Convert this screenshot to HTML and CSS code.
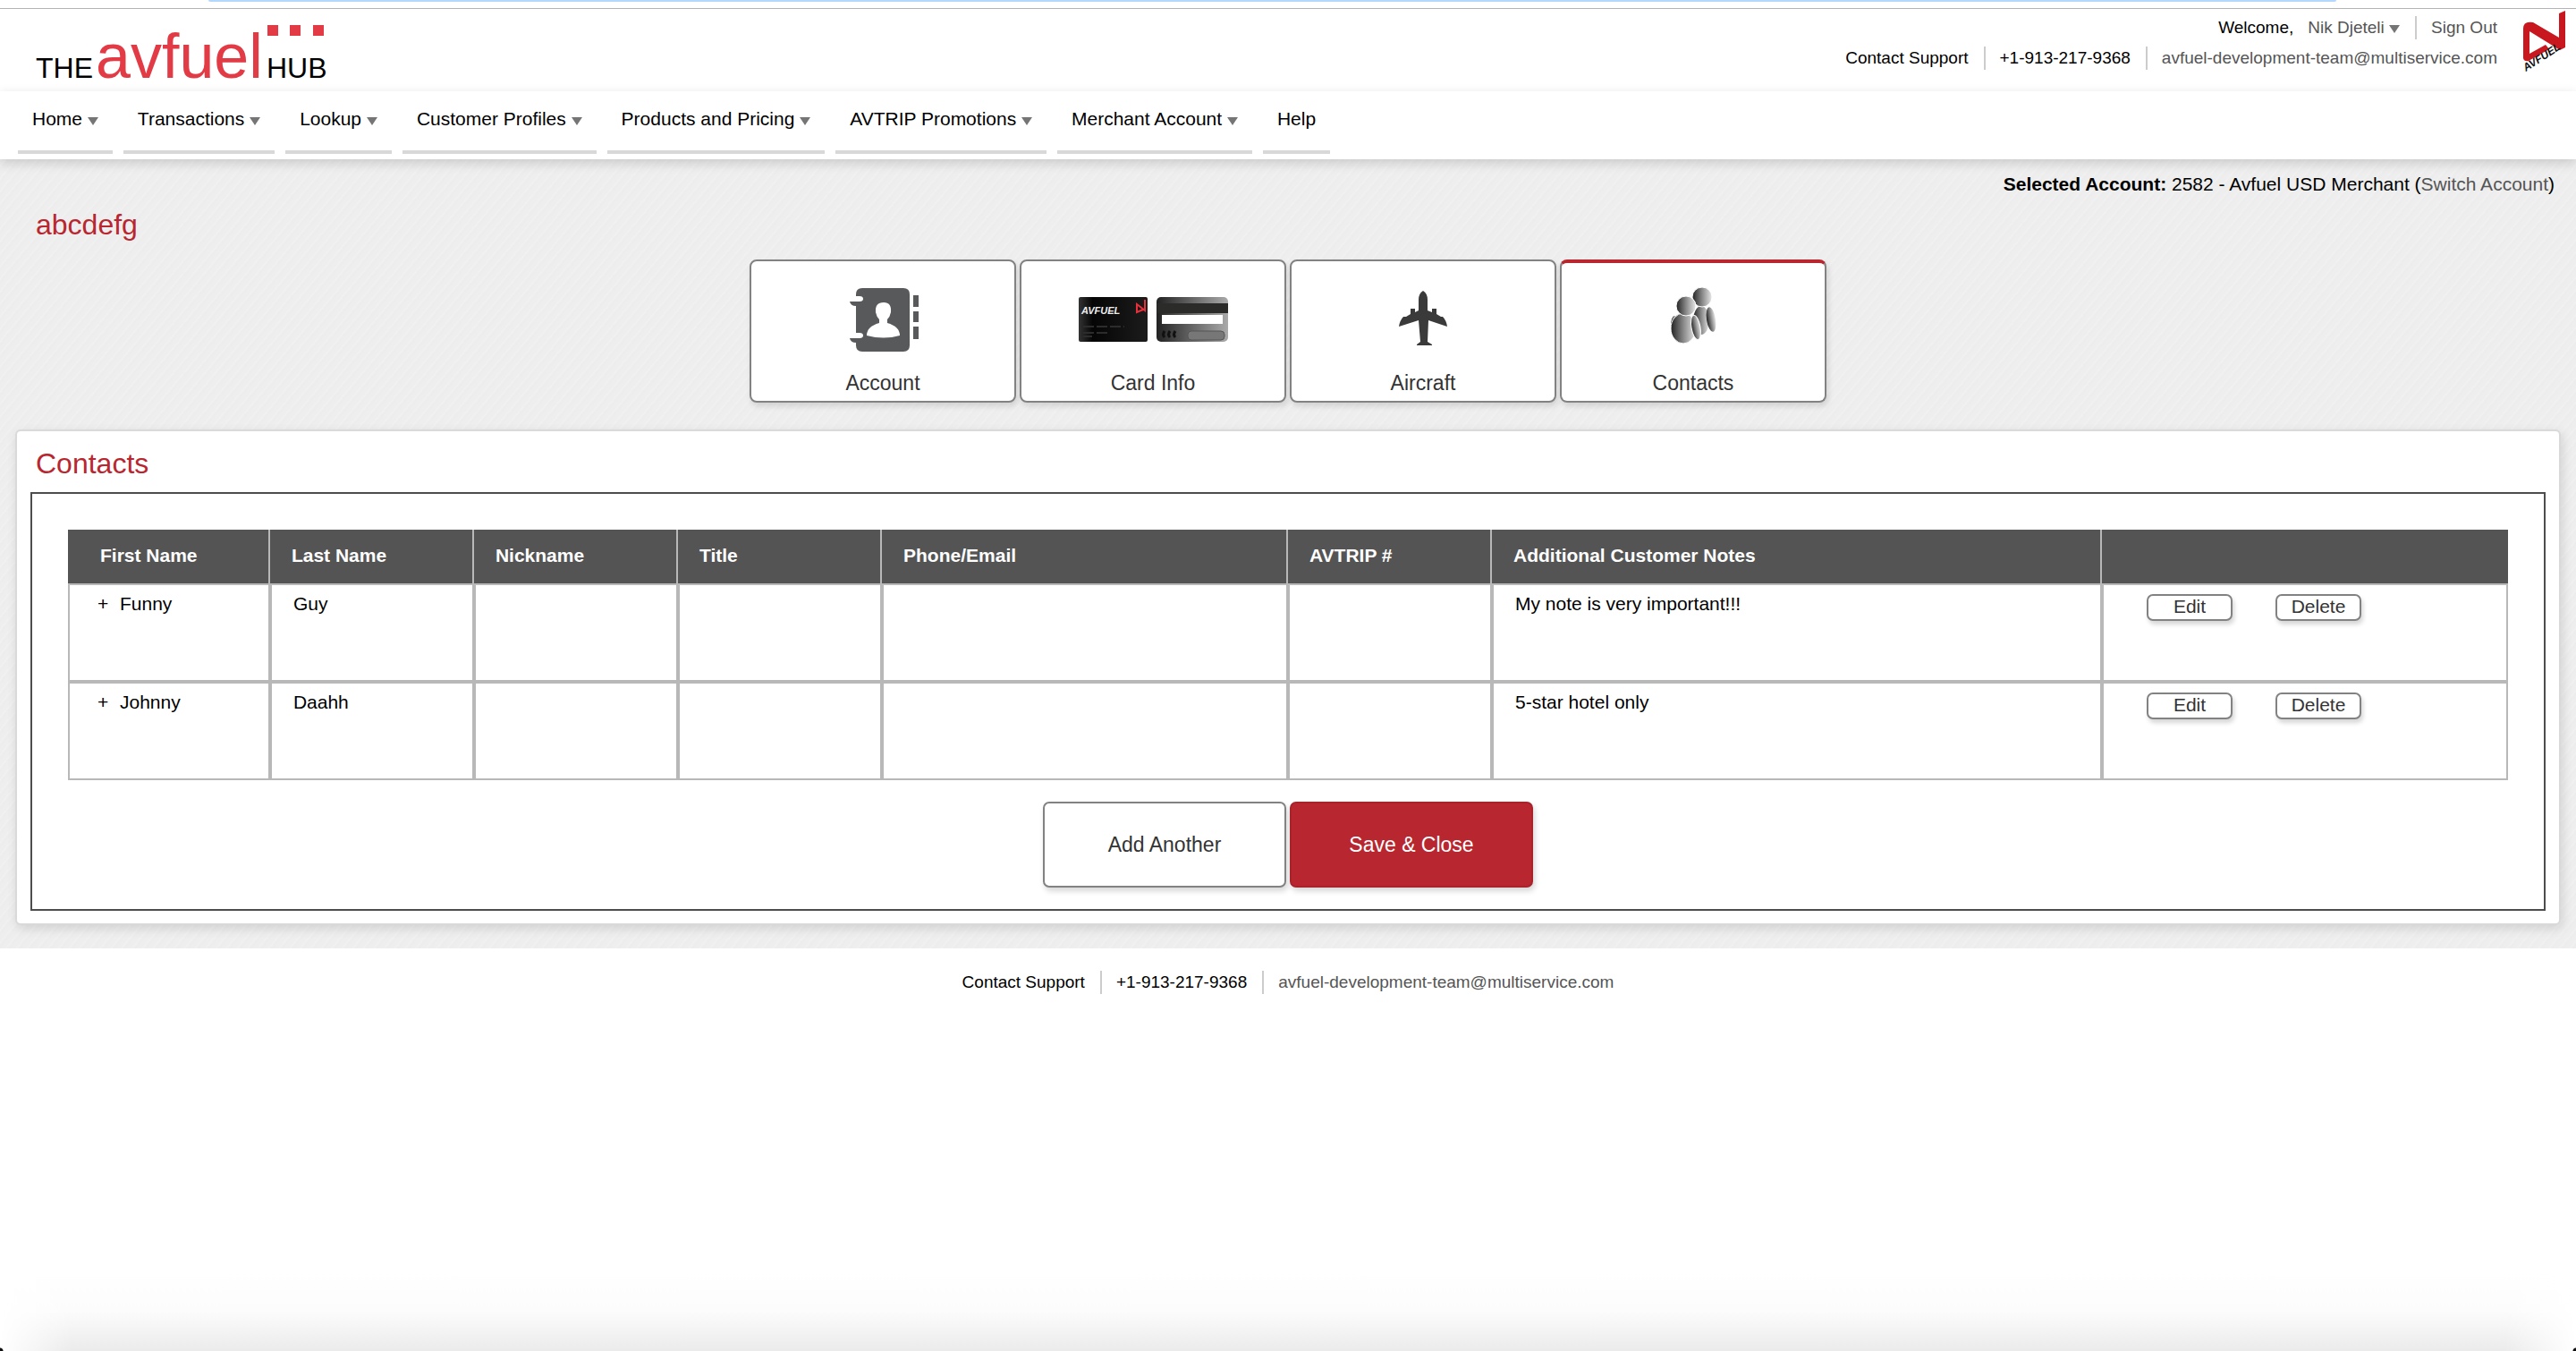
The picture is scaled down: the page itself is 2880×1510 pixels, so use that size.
FILE: index.html
```html
<!DOCTYPE html>
<html lang="en">
<head>
<meta charset="utf-8">
<title>The Avfuel Hub - Contacts</title>
<link rel="stylesheet" href="styles.css">
</head>
<body>
<div class="window-bar"><span class="window-tab"></span></div>
<header class="masthead">
  <a class="brand" href="#" aria-label="The Avfuel Hub">
    <svg width="340" height="84" viewBox="0 0 340 84">
      <text class="brand-thin" x="0" y="69">THE</text>
      <text class="brand-main" x="67" y="69">avfuel</text>
      <text class="brand-thin" x="258" y="69">HUB</text>
      <path fill="#e23b45" d="M259 10h12v12h-12zM284 10h12v12h-12zM310 10h12v12h-12z"/>
    </svg>
  </a>
  <div class="account-area">
    <div class="info-lines">
      <div class="info"><span class="welcome">Welcome,</span><a href="#" class="user">Nik Djeteli <i class="arrow"></i></a><a href="#" class="sep">Sign Out</a></div>
      <div class="info"><span>Contact Support</span><span class="sep">+1-913-217-9368</span><a href="#" class="sep">avfuel-development-team@multiservice.com</a></div>
    </div>
    <svg class="emblem" width="60" height="76" viewBox="0 0 60 76">
      <path d="M58 2L51 5V32L22 15Q11 13 11 22V55Q12 59 17 58L40 45 36 40 18 50V25L52 46 58 43Z" fill="#c8171e"/>
      <text class="emblem-text" transform="translate(14 70) rotate(-33)">AVFUEL</text>
    </svg>
  </div>
</header>
<nav class="menu">
  <a href="#">Home <i class="arrow"></i></a>
  <a href="#">Transactions <i class="arrow"></i></a>
  <a href="#">Lookup <i class="arrow"></i></a>
  <a href="#">Customer Profiles <i class="arrow"></i></a>
  <a href="#">Products and Pricing <i class="arrow"></i></a>
  <a href="#">AVTRIP Promotions <i class="arrow"></i></a>
  <a href="#">Merchant Account <i class="arrow"></i></a>
  <a href="#">Help</a>
</nav>
<main class="content">
  <p class="selected"><b>Selected Account:</b> 2582 - Avfuel USD Merchant (<a href="#">Switch Account</a>)</p>
  <h1>abcdefg</h1>
  <div class="tiles">
    <button class="tile" type="button">
      <svg width="80" height="72" viewBox="-6 0 80 72">
        <path fill="#58595b" d="M8 0h49q7 0 7 7v57q0 7-7 7H11q-7 0-7-7v-3q-6 0-7-5h11q4 0 4-3t-4-3H4V20q-6 0-7-5h11q4 0 4-3t-4-3H4V7q0-7 7-7z"/>
        <path fill="#58595b" d="M68 8h6v13h-6zM68 26h6v12h-6zM68 43h6v14h-6z"/>
        <path fill="#fff" d="M35 16q9 0 8 11-1 5-4 8v4q14 4 14 14-18 5-37 0 0-10 14-14v-4q-3-3-4-8-1-11 9-11z"/>
      </svg>
      <span>Account</span>
    </button>
    <button class="tile" type="button">
      <svg width="168" height="72" viewBox="-1 0 168 72">
        <defs>
          <linearGradient id="front" x1="0" x2="1"><stop offset="0" stop-color="#333"/><stop offset=".2" stop-color="#050505"/><stop offset="1" stop-color="#1c1c1c"/></linearGradient>
          <linearGradient id="back" x1="0" x2="1"><stop offset="0" stop-color="#222"/><stop offset="1" stop-color="#aaa"/></linearGradient>
        </defs>
        <rect x="0" y="10" width="77" height="50" rx="2" fill="url(#front)"/>
        <text class="card-text" x="3" y="29">AVFUEL</text>
        <path d="M74 13v12l-9-7v9l7-3" fill="none" stroke="#e8303a" stroke-width="2"/>
        <path d="M5 43h46M5 50h30M5 54h10" stroke="#2c2c2c" stroke-width="2" stroke-dasharray="12 3"/>
        <rect x="87" y="10" width="80" height="50" rx="5" fill="url(#back)"/>
        <path fill="#2b2b29" d="M88 17h79v11H88z"/>
        <path fill="#fff" d="M93 30h68v10H93z"/>
        <path d="M96 48q-3 4 0 7M102 48q-3 4 0 7M108 48q-3 4 0 7" fill="none" stroke="#111" stroke-width="3"/>
        <rect x="122" y="48" width="41" height="10" rx="4" fill="#777" stroke="#555"/>
      </svg>
      <span>Card Info</span>
    </button>
    <button class="tile" type="button">
      <svg width="56" height="72" viewBox="0 0 56 72">
        <path fill="#3a3a3a" d="M28 3q5 3 5 10v12l5 2v-4h5v6l5 3h2q4 4 5 11l-21-7-1 24 5 3v1H21v-1l4-3-2-24-22 7q1-7 5-11h3l5-3v-6h5v4l4-2V13q0-7 5-10z"/>
      </svg>
      <span>Aircraft</span>
    </button>
    <button class="tile active" type="button">
      <svg width="56" height="72" viewBox="0 0 56 72">
        <defs><linearGradient id="person" x1="0" x2="1"><stop offset="0" stop-color="#222"/><stop offset=".5" stop-color="#888"/><stop offset="1" stop-color="#e8e8e8"/></linearGradient></defs>
        <ellipse cx="37" cy="36" rx="9" ry="16" fill="url(#person)"/>
        <ellipse cx="48" cy="35" rx="5" ry="14" fill="url(#person)" transform="rotate(-9 48 35)"/>
        <circle cx="38" cy="10" r="11" fill="url(#person)" stroke="#fff"/>
        <ellipse cx="7" cy="42" rx="4" ry="11" fill="url(#person)"/>
        <ellipse cx="17" cy="45" rx="14" ry="17" fill="url(#person)" stroke="#fff"/>
        <ellipse cx="31" cy="44" rx="5" ry="14" fill="url(#person)" stroke="#fff" transform="rotate(-10 31 44)"/>
        <circle cx="20" cy="20" r="11" fill="url(#person)" stroke="#fff"/>
      </svg>
      <span>Contacts</span>
    </button>
  </div>
  <section class="panel">
    <h2>Contacts</h2>
    <div class="frame">
      <table class="grid">
        <colgroup><col class="w-first"><col class="w1"><col class="w1"><col class="w1"><col class="w2"><col class="w1"><col class="w3"><col class="w2"></colgroup>
        <thead>
          <tr><th>First Name</th><th>Last Name</th><th>Nickname</th><th>Title</th><th>Phone/Email</th><th>AVTRIP #</th><th>Additional Customer Notes</th><th></th></tr>
        </thead>
        <tbody>
          <tr><td><span class="expand">+</span>Funny</td><td>Guy</td><td></td><td></td><td></td><td></td><td>My note is very important!!!</td><td><div class="row-actions"><button type="button">Edit</button><button type="button">Delete</button></div></td></tr>
          <tr><td><span class="expand">+</span>Johnny</td><td>Daahh</td><td></td><td></td><td></td><td></td><td>5-star hotel only</td><td><div class="row-actions"><button type="button">Edit</button><button type="button">Delete</button></div></td></tr>
        </tbody>
      </table>
      <div class="actions">
        <button type="button">Add Another</button>
        <button type="button" class="primary">Save &amp; Close</button>
      </div>
    </div>
  </section>
</main>
<footer class="footer">
  <div class="info"><span>Contact Support</span><span class="sep">+1-913-217-9368</span><a href="#" class="sep">avfuel-development-team@multiservice.com</a></div>
</footer>
<div class="bottom-glow"></div>
</body>
</html>
```
FILE: styles.css
```css
* { box-sizing: border-box; }
body {
  margin: 0;
  min-height: 100vh;
  display: flex;
  flex-direction: column;
  background: #fff;
  color: #000;
  font: 21px/24px "Liberation Sans", Arial, sans-serif;
}
a { color: #555; text-decoration: none; }
button { font-family: inherit; color: #333; background: #fff; border: 2px solid #828282; cursor: pointer; }

.window-bar { height: 10px; padding: 0 268px 0 233px; border-bottom: 1px solid #b4b4b4; }
.window-tab { display: block; height: 2px; background: #b3d7fd; border-radius: 0 0 4px 4px; }

.masthead { height: 92px; display: flex; justify-content: space-between; padding-left: 40px; }
.brand { padding-top: 8px; }
.brand svg { display: block; }
.brand-main { font: 70px "Liberation Sans", sans-serif; fill: #e23b45; }
.brand-thin { font: 32px "Liberation Sans", sans-serif; fill: #000; }

.account-area { display: flex; gap: 18px; padding-right: 10px; }
.info-lines { display: flex; flex-direction: column; align-items: flex-end; gap: 8px; padding-top: 8px; }
.info { display: flex; font-size: 19px; line-height: 26px; }
.sep { margin-left: 17px; padding-left: 16px; border-left: 2px solid #ccc; }
.welcome { margin-right: 16px; }
.emblem { display: block; }
.emblem-text { font: italic bold 12px "Liberation Sans", sans-serif; fill: #111; }

.arrow {
  display: inline-block;
  border: 6px solid transparent;
  border-top: 9px solid #757575;
  border-bottom: 0;
}

.menu {
  position: relative;
  display: flex;
  gap: 12px;
  height: 76px;
  padding: 18px 20px 6px;
  background: #fff;
  box-shadow: 0 4px 12px rgba(0, 0, 0, .16);
}
.menu a { color: #000; padding: 0 16px; line-height: 26px; border-bottom: 4px solid #d8d8d8; }

.content {
  padding: 16px 17px 26px;
  background: repeating-linear-gradient(130deg, #eee 0 4px, #f0f0f0 4px 6px, #ededed 6px 9px);
}
.selected { margin: 0 7px 0 0; text-align: right; }
h1, h2 { margin: 0; font-size: 32px; line-height: 36px; font-weight: normal; color: #b8272f; }
h1 { padding: 15px 23px 0; }

.tiles { display: flex; justify-content: center; gap: 4px; margin-top: 21px; }
.tile {
  width: 298px;
  height: 160px;
  padding: 30px 0 0;
  display: flex;
  flex-direction: column;
  align-items: center;
  gap: 21px;
  border-radius: 8px;
  box-shadow: 2px 4px 6px rgba(0, 0, 0, .12);
  font-size: 23px;
  line-height: 26px;
}
.tile.active { padding-top: 28px; border-top: 4px solid #b8272f; }
.tile svg { display: block; overflow: visible; }
.card-text { font: italic bold 11px "Liberation Sans", sans-serif; fill: #eee; }

.panel {
  margin-top: 30px;
  padding: 18px 15px 14px;
  background: #fff;
  border: 2px solid #d9d9d9;
  border-radius: 6px;
  box-shadow: 2px 4px 12px rgba(0, 0, 0, .12);
}
.panel h2 { padding: 0 6px; }
.frame { margin-top: 14px; padding: 40px 40px 24px; border: 2px solid #4d4d4d; }

.grid { width: 100%; table-layout: fixed; border-collapse: separate; border-spacing: 0; }
.w-first { width: 8.28%; }
.w1 { width: 8.36%; }
.w2 { width: 16.64%; }
.w3 { width: 25%; }
.grid th, .grid td { text-align: left; vertical-align: top; padding: 0 24px; }
.grid th { height: 60px; padding-top: 17px; background: #545454; color: #fff; border-right: 2px solid #b8b8b8; }
.grid th:first-child { padding-left: 36px; }
.grid th:last-child { border-right: 0; }
.grid td { height: 110px; padding-top: 9px; border: 2px solid #b8b8b8; }
.grid td:first-child { padding-left: 31px; }
.grid td:last-child { padding-left: 48px; }
.expand { display: inline-block; width: 25px; }
.row-actions { display: flex; gap: 48px; padding-top: 1px; }
.row-actions button {
  width: 96px;
  height: 30px;
  padding: 0 0 2px;
  border-radius: 7px;
  font-size: 21px;
  line-height: 24px;
  box-shadow: 2px 4px 5px rgba(0, 0, 0, .16);
}

.actions { display: flex; justify-content: center; gap: 4px; margin-top: 24px; }
.actions button {
  width: 272px;
  height: 96px;
  border-radius: 7px;
  font-size: 23px;
  box-shadow: 2px 4px 6px rgba(0, 0, 0, .16);
}
.actions .primary { color: #fff; background: #b8272f; border-color: #a8232a; }

.footer { display: flex; justify-content: center; padding-top: 25px; }
.bottom-glow {
  margin-top: auto;
  height: 90px;
  background:
    radial-gradient(circle at 0 100%, #111 3px, transparent 4px),
    radial-gradient(circle at 100% 100%, #111 3px, transparent 4px),
    linear-gradient(to right, #fff, transparent 80px, transparent calc(100% - 80px), #fff),
    linear-gradient(#fff, #fcfcfc 50%, #ebebeb);
}
```
